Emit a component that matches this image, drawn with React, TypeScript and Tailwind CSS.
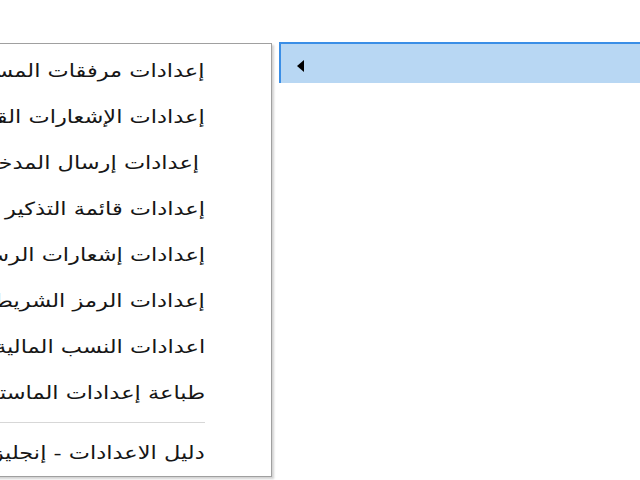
import React from 'react'

const items = [
  { label: 'إعدادات مرفقات المستندات' },
  { label: 'إعدادات الإشعارات القصيرة' },
  { label: 'إعدادات إرسال المدخلات', indent: true },
  { label: 'إعدادات قائمة التذكير' },
  { label: 'إعدادات إشعارات الرسائل' },
  { label: 'إعدادات الرمز الشريطي' },
  { label: 'اعدادات النسب المالية' },
  { label: 'طباعة إعدادات الماستر' }
]

function Item({ label, indent }: { label: string; indent?: boolean }) {
  return (
    <div
      className={
        'h-[46px] flex items-center justify-start whitespace-nowrap text-[18px] text-[#161616] ' +
        (indent ? 'pr-[72px]' : 'pr-[66px]')
      }
    >
      <span className="inline-block origin-right scale-x-[1.25]">{label}</span>
    </div>
  )
}

export default function App() {
  return (
    <div
      className="w-[640px] h-[480px] bg-white overflow-hidden flex items-start pt-[42px]"
      style={{ fontFamily: '"DejaVu Sans", Tahoma, sans-serif' }}
    >
      <div
        dir="rtl"
        className="-ml-[10px] mt-[1px] w-[282px] h-[434px] shrink-0 overflow-hidden bg-white border border-[#a0a0a0] shadow-[2px_2px_2px_rgba(0,0,0,0.18)] pt-[3px]"
      >
        {items.map((it, i) => (
          <Item key={i} label={it.label} indent={it.indent} />
        ))}
        <div className="h-[14px] flex items-center pr-[66px]">
          <div className="h-px w-full bg-[#d7d7d7]" />
        </div>
        <Item label="دليل الاعدادات - إنجليزي" />
      </div>

      <div className="ml-[7px] flex-1 h-[41px] bg-[#b8d7f3] border-t-2 border-l-2 border-[#3a8ee6] flex items-center pl-[16px]">
        <svg width="7" height="12" viewBox="0 0 7 12" className="mt-[4px]">
          <path d="M7 0 L0 6 L7 12 Z" fill="#000" />
        </svg>
      </div>
    </div>
  )
}
